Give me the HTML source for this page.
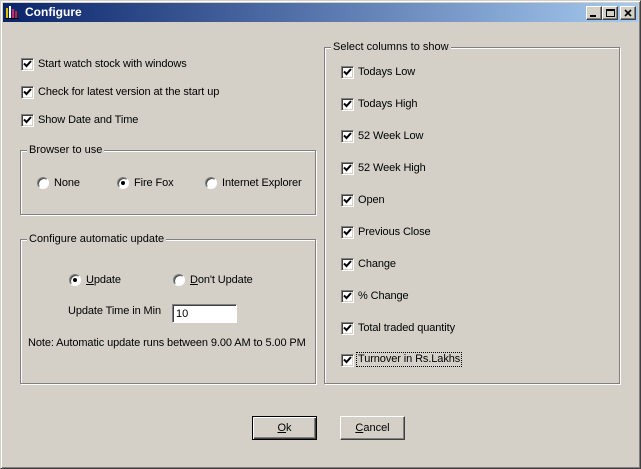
<!DOCTYPE html>
<html><head><style>
*{margin:0;padding:0;box-sizing:border-box}
body{width:641px;height:469px;background:#d4d0c8;font-family:"Liberation Sans",sans-serif;font-size:11px;color:#000;position:relative;overflow:hidden}
.win{position:absolute;left:0;top:0;width:641px;height:469px;border:1px solid #d4d0c8;border-right-color:#404040;border-bottom-color:#404040;box-shadow:inset 1px 1px 0 #fff,inset -1px -1px 0 #808080}
.title{position:absolute;left:3px;top:3px;width:635px;height:19px;background:linear-gradient(to right,#0a246a,#a6caf0);color:#fff;font-weight:bold;font-size:12px;line-height:19px;padding-left:22px}
.tb{position:absolute;top:6px;width:16px;height:14px;background:#d4d0c8;border:1px solid #fff;border-right-color:#404040;border-bottom-color:#404040;box-shadow:inset -1px -1px 0 #808080}
.g{position:absolute;border:1px solid #808080;box-shadow:1px 1px 0 #fff,inset 1px 1px 0 #fff}
.gl{position:absolute;top:-7px;left:6px;background:#d4d0c8;padding:0 2px;line-height:13px}
.t{position:absolute;line-height:13px;white-space:nowrap;letter-spacing:-0.1px}
.cb{position:absolute;width:13px;height:13px;background:#fff;border:1px solid #808080;border-right-color:#fff;border-bottom-color:#fff;box-shadow:inset 1px 1px 0 #404040,inset -1px -1px 0 #d4d0c8}
.rb{position:absolute;width:12px;height:12px;border-radius:50%;background:#fff;border:1px solid #808080;border-right-color:#fff;border-bottom-color:#fff;box-shadow:inset 1px 1px 0 #404040}
.rb.on::after{content:"";position:absolute;left:3px;top:3px;width:4px;height:4px;border-radius:50%;background:#000}
.btn{position:absolute;width:65px;height:24px;background:#d4d0c8;border:1px solid #fff;border-right-color:#404040;border-bottom-color:#404040;box-shadow:inset -1px -1px 0 #808080;text-align:center;line-height:22px}
</style></head><body>
<div class="win"></div>
<div class="title">Configure</div>
<svg style="position:absolute;left:5px;top:5px" width="16" height="15"><rect x="1" y="3" width="2" height="11" fill="#e0c000"/><rect x="4" y="1" width="2" height="13" fill="#fff"/><rect x="7" y="4" width="2" height="10" fill="#c03080"/><rect x="10" y="6" width="2" height="8" fill="#d02020"/><rect x="0" y="13" width="14" height="1" fill="#000"/></svg>
<div class="tb" style="left:586px"><div style="position:absolute;left:3px;top:8px;width:6px;height:2px;background:#000"></div></div>
<div class="tb" style="left:602px"><div style="position:absolute;left:3px;top:2px;width:9px;height:8px;border:1px solid #000;border-top-width:2px"></div></div>
<div class="tb" style="left:620px;width:16px"><svg width="14" height="12" style="position:absolute;left:0;top:0"><path d="M4 3l6 6M10 3l-6 6" stroke="#000" stroke-width="1.6"/></svg></div>

<svg width="0" height="0" style="position:absolute"><defs><path id="ck" d="M2 4.5l2.5 2.5l4.5-5" stroke="#000" stroke-width="2" fill="none"/></defs></svg>

<div class="cb" style="left:21px;top:58px"><svg width="11" height="11"><use href="#ck"/></svg></div><div class="t" style="left:38px;top:58px">Start watch stock with windows</div>
<div class="cb" style="left:21px;top:86px"><svg width="11" height="11"><use href="#ck"/></svg></div><div class="t" style="left:38px;top:86px">Check for latest version at the start up</div>
<div class="cb" style="left:21px;top:114px"><svg width="11" height="11"><use href="#ck"/></svg></div><div class="t" style="left:38px;top:114px">Show Date and Time</div>

<div class="g" style="left:20px;top:150px;width:296px;height:65px"><div class="gl">Browser to use</div></div>
<div class="rb" style="left:37px;top:177px"></div><div class="t" style="left:54px;top:177px">None</div>
<div class="rb on" style="left:117px;top:177px"></div><div class="t" style="left:134px;top:177px">Fire Fox</div>
<div class="rb" style="left:205px;top:177px"></div><div class="t" style="left:222px;top:177px">Internet Explorer</div>

<div class="g" style="left:20px;top:239px;width:296px;height:145px"><div class="gl">Configure automatic update</div></div>
<div class="rb on" style="left:69px;top:274px"></div><div class="t" style="left:86px;top:274px"><u>U</u>pdate</div>
<div class="rb" style="left:173px;top:274px"></div><div class="t" style="left:190px;top:274px"><u>D</u>on't Update</div>
<div class="t" style="left:68px;top:305px">Update Time in Min</div>
<div style="position:absolute;left:172px;top:304px;width:65px;height:19px;background:#fff;border:1px solid #808080;border-right-color:#fff;border-bottom-color:#fff;box-shadow:inset 1px 1px 0 #404040;padding:3px 0 0 3px;line-height:13px">10</div>
<div class="t" style="left:28px;top:337px">Note: Automatic update runs between 9.00 AM to 5.00 PM</div>

<div class="g" style="left:324px;top:47px;width:296px;height:337px"><div class="gl">Select columns to show</div></div>
<div class="cb" style="left:341px;top:66px"><svg width="11" height="11"><use href="#ck"/></svg></div><div class="t" style="left:358px;top:66px">Todays Low</div>
<div class="cb" style="left:341px;top:98px"><svg width="11" height="11"><use href="#ck"/></svg></div><div class="t" style="left:358px;top:98px">Todays High</div>
<div class="cb" style="left:341px;top:130px"><svg width="11" height="11"><use href="#ck"/></svg></div><div class="t" style="left:358px;top:130px">52 Week Low</div>
<div class="cb" style="left:341px;top:162px"><svg width="11" height="11"><use href="#ck"/></svg></div><div class="t" style="left:358px;top:162px">52 Week High</div>
<div class="cb" style="left:341px;top:194px"><svg width="11" height="11"><use href="#ck"/></svg></div><div class="t" style="left:358px;top:194px">Open</div>
<div class="cb" style="left:341px;top:226px"><svg width="11" height="11"><use href="#ck"/></svg></div><div class="t" style="left:358px;top:226px">Previous Close</div>
<div class="cb" style="left:341px;top:258px"><svg width="11" height="11"><use href="#ck"/></svg></div><div class="t" style="left:358px;top:258px">Change</div>
<div class="cb" style="left:341px;top:290px"><svg width="11" height="11"><use href="#ck"/></svg></div><div class="t" style="left:358px;top:290px">% Change</div>
<div class="cb" style="left:341px;top:322px"><svg width="11" height="11"><use href="#ck"/></svg></div><div class="t" style="left:358px;top:322px">Total traded quantity</div>
<div class="cb" style="left:341px;top:354px"><svg width="11" height="11"><use href="#ck"/></svg></div><div class="t" style="left:357px;top:353px;outline:1px dotted #000;padding:0 1px">Turnover in Rs.Lakhs</div>

<div class="btn" style="left:252px;top:416px;border-color:#000;box-shadow:inset 1px 1px 0 #fff,inset -1px -1px 0 #404040,inset -2px -2px 0 #808080"><u>O</u>k</div>
<div class="btn" style="left:340px;top:416px"><u>C</u>ancel</div>
</body></html>
